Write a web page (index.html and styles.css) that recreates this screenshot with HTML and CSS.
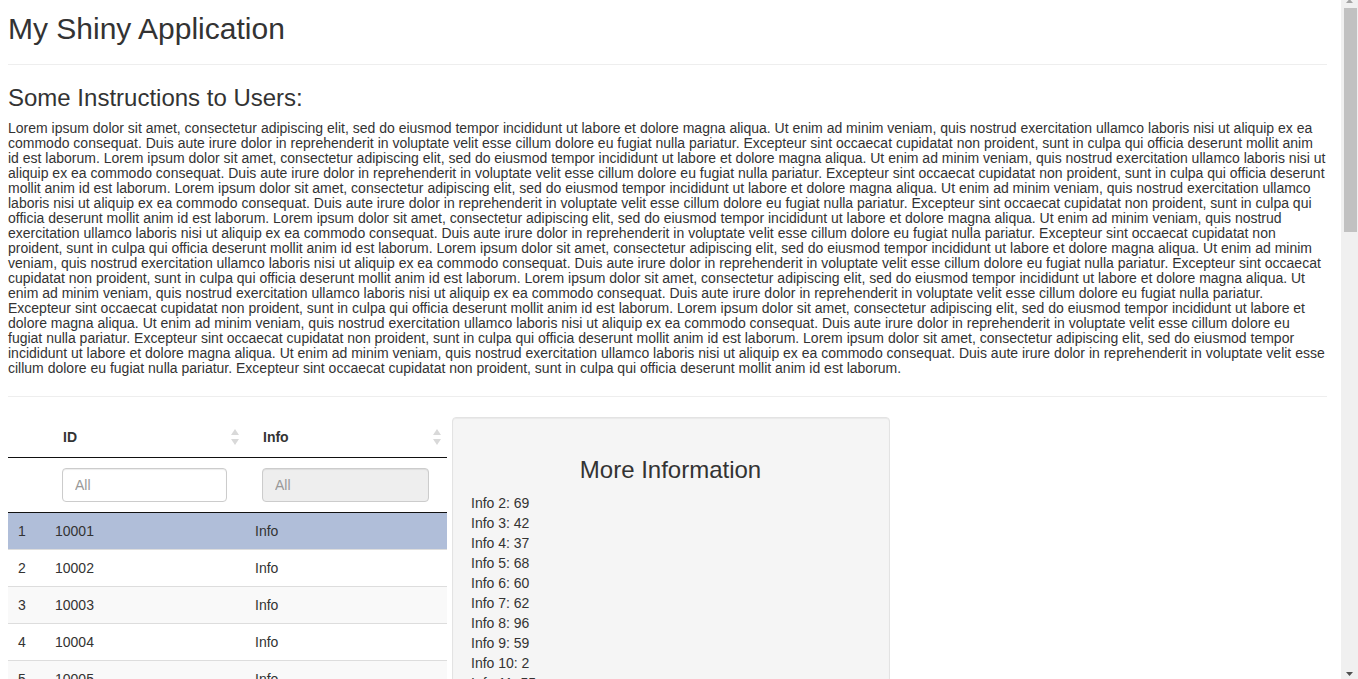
FILE: index.html
```html
<!DOCTYPE html>
<html>
<head>
<meta charset="utf-8">
<title>My Shiny Application</title>
<link rel="stylesheet" href="styles.css">
</head>
<body>
<div class="page">
  <h2 class="title">My Shiny Application</h2>
  <hr class="rule">
  <h3 class="section-title">Some Instructions to Users:</h3>
  <p class="lorem">Lorem ipsum dolor sit amet, consectetur adipiscing elit, sed do eiusmod tempor incididunt ut labore et dolore magna aliqua. Ut enim ad minim veniam, quis nostrud exercitation ullamco laboris nisi ut aliquip ex ea commodo consequat. Duis aute irure dolor in reprehenderit in voluptate velit esse cillum dolore eu fugiat nulla pariatur. Excepteur sint occaecat cupidatat non proident, sunt in culpa qui officia deserunt mollit anim id est laborum. Lorem ipsum dolor sit amet, consectetur adipiscing elit, sed do eiusmod tempor incididunt ut labore et dolore magna aliqua. Ut enim ad minim veniam, quis nostrud exercitation ullamco laboris nisi ut aliquip ex ea commodo consequat. Duis aute irure dolor in reprehenderit in voluptate velit esse cillum dolore eu fugiat nulla pariatur. Excepteur sint occaecat cupidatat non proident, sunt in culpa qui officia deserunt mollit anim id est laborum. Lorem ipsum dolor sit amet, consectetur adipiscing elit, sed do eiusmod tempor incididunt ut labore et dolore magna aliqua. Ut enim ad minim veniam, quis nostrud exercitation ullamco laboris nisi ut aliquip ex ea commodo consequat. Duis aute irure dolor in reprehenderit in voluptate velit esse cillum dolore eu fugiat nulla pariatur. Excepteur sint occaecat cupidatat non proident, sunt in culpa qui officia deserunt mollit anim id est laborum. Lorem ipsum dolor sit amet, consectetur adipiscing elit, sed do eiusmod tempor incididunt ut labore et dolore magna aliqua. Ut enim ad minim veniam, quis nostrud exercitation ullamco laboris nisi ut aliquip ex ea commodo consequat. Duis aute irure dolor in reprehenderit in voluptate velit esse cillum dolore eu fugiat nulla pariatur. Excepteur sint occaecat cupidatat non proident, sunt in culpa qui officia deserunt mollit anim id est laborum. Lorem ipsum dolor sit amet, consectetur adipiscing elit, sed do eiusmod tempor incididunt ut labore et dolore magna aliqua. Ut enim ad minim veniam, quis nostrud exercitation ullamco laboris nisi ut aliquip ex ea commodo consequat. Duis aute irure dolor in reprehenderit in voluptate velit esse cillum dolore eu fugiat nulla pariatur. Excepteur sint occaecat cupidatat non proident, sunt in culpa qui officia deserunt mollit anim id est laborum. Lorem ipsum dolor sit amet, consectetur adipiscing elit, sed do eiusmod tempor incididunt ut labore et dolore magna aliqua. Ut enim ad minim veniam, quis nostrud exercitation ullamco laboris nisi ut aliquip ex ea commodo consequat. Duis aute irure dolor in reprehenderit in voluptate velit esse cillum dolore eu fugiat nulla pariatur. Excepteur sint occaecat cupidatat non proident, sunt in culpa qui officia deserunt mollit anim id est laborum. Lorem ipsum dolor sit amet, consectetur adipiscing elit, sed do eiusmod tempor incididunt ut labore et dolore magna aliqua. Ut enim ad minim veniam, quis nostrud exercitation ullamco laboris nisi ut aliquip ex ea commodo consequat. Duis aute irure dolor in reprehenderit in voluptate velit esse cillum dolore eu fugiat nulla pariatur. Excepteur sint occaecat cupidatat non proident, sunt in culpa qui officia deserunt mollit anim id est laborum. Lorem ipsum dolor sit amet, consectetur adipiscing elit, sed do eiusmod tempor incididunt ut labore et dolore magna aliqua. Ut enim ad minim veniam, quis nostrud exercitation ullamco laboris nisi ut aliquip ex ea commodo consequat. Duis aute irure dolor in reprehenderit in voluptate velit esse cillum dolore eu fugiat nulla pariatur. Excepteur sint occaecat cupidatat non proident, sunt in culpa qui officia deserunt mollit anim id est laborum.</p>
  <hr class="rule">
  <div class="main-row">
    <div class="table-col">
      <table class="dt">
        <colgroup>
          <col class="c-rn">
          <col class="c-id">
          <col class="c-info">
        </colgroup>
        <thead>
          <tr class="head-row">
            <th class="th-rn"></th>
            <th class="th-sort"><div class="th-inner"><span>ID</span><svg class="sort-icon" width="8" height="16" viewBox="0 0 8 16"><path d="M4 0 L8 6 L0 6 Z" fill="#d9d9d9"/><path d="M0 10 L8 10 L4 16 Z" fill="#d9d9d9"/></svg></div></th>
            <th class="th-sort"><div class="th-inner"><span>Info</span><svg class="sort-icon" width="8" height="16" viewBox="0 0 8 16"><path d="M4 0 L8 6 L0 6 Z" fill="#d9d9d9"/><path d="M0 10 L8 10 L4 16 Z" fill="#d9d9d9"/></svg></div></th>
          </tr>
          <tr class="filter-row">
            <td class="filter-cell-rn"></td>
            <td class="filter-cell"><input class="filter-input" type="search" placeholder="All"></td>
            <td class="filter-cell"><input class="filter-input" type="search" placeholder="All" disabled></td>
          </tr>
        </thead>
        <tbody>
          <tr class="row odd selected"><td>1</td><td>10001</td><td>Info</td></tr>
          <tr class="row even"><td>2</td><td>10002</td><td>Info</td></tr>
          <tr class="row odd"><td>3</td><td>10003</td><td>Info</td></tr>
          <tr class="row even"><td>4</td><td>10004</td><td>Info</td></tr>
          <tr class="row odd"><td>5</td><td>10005</td><td>Info</td></tr>
          <tr class="row even"><td>6</td><td>10006</td><td>Info</td></tr>
          <tr class="row odd"><td>7</td><td>10007</td><td>Info</td></tr>
          <tr class="row even"><td>8</td><td>10008</td><td>Info</td></tr>
          <tr class="row odd"><td>9</td><td>10009</td><td>Info</td></tr>
          <tr class="row even"><td>10</td><td>10010</td><td>Info</td></tr>
        </tbody>
      </table>
      <div class="dt-footer">
        <div class="dt-info">Showing 1 to 10 of 100 entries</div>
        <div class="dt-pages">
          <span class="pg">Previous</span><span class="pg active">1</span><span class="pg">2</span><span class="pg">3</span><span class="pg">4</span><span class="pg">5</span><span class="pg">&hellip;</span><span class="pg">10</span><span class="pg">Next</span>
        </div>
      </div>
    </div>
    <div class="well">
      <h3 class="well-title">More Information</h3>
      <div class="info-list">
        <div>Info 2: 69</div>
        <div>Info 3: 42</div>
        <div>Info 4: 37</div>
        <div>Info 5: 68</div>
        <div>Info 6: 60</div>
        <div>Info 7: 62</div>
        <div>Info 8: 96</div>
        <div>Info 9: 59</div>
        <div>Info 10: 2</div>
        <div>Info 11: 55</div>
        <div>Info 12: 18</div>
        <div>Info 13: 81</div>
        <div>Info 14: 27</div>
        <div>Info 15: 44</div>
        <div>Info 16: 93</div>
        <div>Info 17: 7</div>
        <div>Info 18: 50</div>
        <div>Info 19: 36</div>
        <div>Info 20: 72</div>
        <div>Info 21: 15</div>
        <div>Info 22: 88</div>
        <div>Info 23: 63</div>
        <div>Info 24: 29</div>
        <div>Info 25: 41</div>
        <div>Info 26: 77</div>
        <div>Info 27: 3</div>
        <div>Info 28: 58</div>
        <div>Info 29: 90</div>
        <div>Info 30: 24</div>
        <div>Info 31: 66</div>
        <div>Info 32: 11</div>
        <div>Info 33: 47</div>
        <div>Info 34: 83</div>
        <div>Info 35: 35</div>
        <div>Info 36: 70</div>
        <div>Info 37: 19</div>
        <div>Info 38: 52</div>
        <div>Info 39: 98</div>
        <div>Info 40: 31</div>
        <div>Info 41: 64</div>
        <div>Info 42: 9</div>
        <div>Info 43: 75</div>
        <div>Info 44: 46</div>
        <div>Info 45: 22</div>
        <div>Info 46: 87</div>
        <div>Info 47: 54</div>
        <div>Info 48: 13</div>
        <div>Info 49: 79</div>
        <div>Info 50: 38</div>
        <div>Info 51: 61</div>
        <div>Info 52: 26</div>
        <div>Info 53: 92</div>
        <div>Info 54: 5</div>
        <div>Info 55: 49</div>
        <div>Info 56: 71</div>
        <div>Info 57: 33</div>
        <div>Info 58: 85</div>
        <div>Info 59: 17</div>
        <div>Info 60: 57</div>
        <div>Info 61: 40</div>
        <div>Info 62: 94</div>
        <div>Info 63: 28</div>
        <div>Info 64: 67</div>
        <div>Info 65: 12</div>
        <div>Info 66: 80</div>
        <div>Info 67: 45</div>
        <div>Info 68: 23</div>
        <div>Info 69: 89</div>
        <div>Info 70: 51</div>
        <div>Info 71: 34</div>
        <div>Info 72: 76</div>
        <div>Info 73: 8</div>
        <div>Info 74: 65</div>
      </div>
    </div>
  </div>
</div>
<div class="scrollbar" aria-hidden="true">
  <svg class="sb-arrow" width="17" height="8" viewBox="0 0 17 8"><path d="M5 3 L12 3 L8.5 -1 Z" fill="#a3a3a3"/></svg>
  <div class="sb-thumb"></div>
  <div class="sb-space"></div>
  <svg class="sb-arrow" width="17" height="9" viewBox="0 0 17 9"><path d="M5 2 L12 2 L8.5 6 Z" fill="#505050"/></svg>
</div>
</body>
</html>
```

FILE: styles.css
```css
html {
  background: #fff;
}
body {
  margin: 0;
  height: 100vh;
  display: flex;
  overflow: hidden;
  font-family: "Liberation Sans", Arial, Helvetica, sans-serif;
  font-size: 14px;
  line-height: 20px;
  color: #333;
  background: #fff;
}
.page {
  flex: 1;
  min-width: 0;
  overflow-y: auto;
  scrollbar-width: none;
  padding: 0 14px 20px 8px;
}
.page::-webkit-scrollbar {
  display: none;
}
.scrollbar {
  flex: 0 0 17px;
  display: flex;
  flex-direction: column;
  background: #f0f0f0;
}
.sb-arrow {
  display: block;
  flex: 0 0 auto;
}
.sb-thumb {
  flex: 0 0 224px;
  margin: 0 1px 0 3px;
  background: #c1c1c1;
}
.sb-space {
  flex: 1;
}
.title {
  margin: 12px 0 19px;
  font-size: 30px;
  font-weight: 400;
  line-height: 33px;
}
.rule {
  margin: 0;
  border: 0;
  border-top: 1px solid #eee;
  height: 0;
}
.section-title {
  margin: 20px 0 10px;
  font-size: 24px;
  font-weight: 400;
  line-height: 26px;
}
.lorem {
  margin: 0 0 20px;
  font-size: 14px;
  line-height: 15px;
}
.main-row {
  margin-top: 20px;
  display: grid;
  grid-template-columns: 439px 438px;
  column-gap: 5px;
  align-items: start;
}
.dt {
  width: 439px;
  border-collapse: collapse;
  table-layout: fixed;
}
.c-rn { width: 37px; }
.c-id { width: 200px; }
.c-info { width: 202px; }
.head-row th {
  text-align: left;
  font-weight: 700;
  padding: 10px 6px 10px 18px;
  border-bottom: 1px solid #111;
  height: 20px;
}
.head-row .th-rn {
  padding: 10px;
}
.th-inner {
  display: flex;
  justify-content: space-between;
  align-items: center;
}
.sort-icon {
  display: block;
}
.filter-row td {
  padding: 10px 18px 10px 17px;
  border-bottom: 1px solid #111;
}
.filter-row .filter-cell-rn {
  padding: 0;
}
.filter-input {
  display: block;
  box-sizing: border-box;
  width: 100%;
  height: 34px;
  margin: 0;
  padding: 6px 12px;
  border: 1px solid #ccc;
  border-radius: 4px;
  background: #fff;
  font-family: "Liberation Sans", Arial, sans-serif;
  font-size: 14px;
  color: #555;
  box-shadow: inset 0 1px 1px rgba(0,0,0,.075);
  -webkit-appearance: none;
  appearance: none;
}
.filter-input::placeholder {
  color: #999;
}
.filter-input:disabled {
  background: #eee;
}
.row td {
  padding: 8px 10px;
  line-height: 20px;
  border-top: 1px solid #ddd;
  white-space: nowrap;
}
.row:first-child td {
  border-top: 0;
}
.row.odd td {
  background: #f9f9f9;
}
.row.even td {
  background: #fff;
}
.row.selected td {
  background: #b0bed9;
}
.dt-footer {
  display: flex;
  flex-direction: column;
  gap: 8px;
  padding-top: 10px;
  border-top: 1px solid #111;
}
.dt-info {
  padding-top: 8px;
}
.dt-pages {
  display: flex;
  flex-wrap: wrap;
}
.pg {
  padding: 6px 10px;
  border: 1px solid #ddd;
  margin-left: -1px;
  color: #337ab7;
}
.pg.active {
  background: #337ab7;
  border-color: #337ab7;
  color: #fff;
}
.well {
  background: #f5f5f5;
  border: 1px solid #e3e3e3;
  border-radius: 4px;
  padding: 19px 19px 19px 18px;
  box-shadow: inset 0 1px 1px rgba(0,0,0,.05);
}
.well-title {
  margin: 20px 0 10px;
  font-size: 24px;
  font-weight: 400;
  line-height: 26px;
  text-align: center;
}
.info-list div {
  line-height: 20px;
}
```
